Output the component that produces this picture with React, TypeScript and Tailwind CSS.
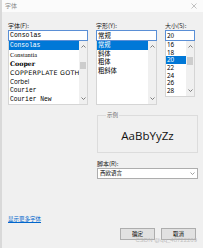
import React from 'react';

const fonts: { name: string; cls: string }[] = [
  { name: 'Consolas', cls: "font-['Liberation_Mono',monospace]" },
  { name: 'Constantia', cls: "font-['Liberation_Serif',serif]" },
  { name: 'Cooper', cls: "font-['DejaVu_Serif',serif] font-black" },
  { name: 'COPPERPLATE GOTHIC', cls: "font-['DejaVu_Sans',sans-serif] tracking-[0.3px] text-[5.4px]" },
  { name: 'Corbel', cls: "font-['Open_Sans',sans-serif]" },
  { name: 'Courier', cls: "font-['Liberation_Mono',monospace]" },
  { name: 'Courier New', cls: "font-['Liberation_Mono',monospace]" },
];

const styles = ['常规', '斜体', '粗体', '粗斜体'];
const sizes = ['16', '18', '20', '22', '24', '26', '28'];

const cjk = "font-['Noto_Sans_CJK_SC',sans-serif]";

const Scrollbar: React.FC<{ thumbTop?: number; thumbH?: number }> = ({ thumbTop, thumbH }) => (
  <div className="relative w-[8px] h-full bg-[#f0f0f0] flex flex-col items-center justify-between py-[2px] text-[#606060]">
    <svg width="5" height="3" viewBox="0 0 5 3" className="mt-[2px]">
      <path d="M0.5 2.5 L2.5 0.5 L4.5 2.5" fill="none" stroke="currentColor" strokeWidth="0.8" />
    </svg>
    {thumbTop !== undefined && (
      <div className="absolute left-[1px] w-[6px] bg-[#cdcdcd]" style={{ top: thumbTop, height: thumbH }} />
    )}
    <svg width="5" height="3" viewBox="0 0 5 3" className="mb-[2px]">
      <path d="M0.5 0.5 L2.5 2.5 L4.5 0.5" fill="none" stroke="currentColor" strokeWidth="0.8" />
    </svg>
  </div>
);

const Label: React.FC<{ children: React.ReactNode }> = ({ children }) => (
  <div className={`${cjk} text-[6px] leading-[8px] h-[8px] text-[#1a1a1a]`}>{children}</div>
);

const Input: React.FC<{ value: string; mono?: boolean }> = ({ value, mono }) => (
  <div
    className={`h-[11px] border border-[#5a8fd6] bg-white px-[1px] text-[6.5px] leading-[9px] text-black ${
      mono ? "font-['Liberation_Mono',monospace]" : cjk
    }`}
  >
    {value}
  </div>
);

export default function App() {
  return (
    <div className="w-[203px] h-[248px] bg-[#f0f0f0] border-l-2 border-[#d9d9d9] flex flex-col overflow-hidden text-[6px] leading-[8px]">
      {/* title bar */}
      <div className="h-[12px] bg-[#fbfbfb] flex items-center justify-between pl-[3px] pr-[6px]">
        <span className={`${cjk} text-[6px] text-[#8c8c8c]`}>字体</span>
        <svg width="6" height="6" viewBox="0 0 6 6" className="text-[#9a9a9a]">
          <path d="M0.5 0.5 L5.5 5.5 M5.5 0.5 L0.5 5.5" stroke="currentColor" strokeWidth="0.6" />
        </svg>
      </div>

      <div className="flex pl-[6px] pt-[10px] gap-[8px]">
        {/* font */}
        <div className="w-[80px] flex flex-col">
          <Label>字体(F):</Label>
          <Input value="Consolas" mono />
          <div className="h-[64px] bg-white border border-[#d5d5d5] border-t-0 flex">
            <div className="flex-1 flex flex-col overflow-hidden">
              {fonts.map((f, i) => (
                <div
                  key={f.name}
                  className={`h-[9px] leading-[9px] text-[6.3px] whitespace-nowrap pl-[1px] ${f.cls} ${
                    i === 0 ? 'bg-[#0078d7] text-white' : 'text-black'
                  }`}
                >
                  {f.name}
                </div>
              ))}
            </div>
            <Scrollbar thumbTop={21} thumbH={7} />
          </div>
        </div>

        {/* style */}
        <div className="w-[61px] flex flex-col">
          <Label>字形(Y):</Label>
          <Input value="常规" />
          <div className="h-[64px] bg-white border border-[#d5d5d5] border-t-0 flex">
            <div className="flex-1 flex flex-col">
              {styles.map((s, i) => (
                <div
                  key={s}
                  className={`h-[8.7px] leading-[8.7px] text-[6.3px] pl-[1px] ${cjk} ${
                    i === 0 ? 'bg-[#0078d7] text-white' : 'text-black'
                  }`}
                >
                  {s}
                </div>
              ))}
            </div>
            <Scrollbar />
          </div>
        </div>

        {/* size */}
        <div className="w-[30px] flex flex-col">
          <Label>大小(S):</Label>
          <Input value="20" />
          <div className="h-[56px] bg-white border border-[#d5d5d5] border-t-0 flex">
            <div className="flex-1 flex flex-col overflow-hidden">
              {sizes.map((s, i) => (
                <div
                  key={s}
                  className={`h-[7.7px] shrink-0 leading-[7.7px] text-[6.3px] pl-[1px] font-['Noto_Sans',sans-serif] ${
                    i === 2 ? 'bg-[#0078d7] text-white' : 'text-black'
                  }`}
                >
                  {s}
                </div>
              ))}
            </div>
            <Scrollbar thumbTop={16} thumbH={8} />
          </div>
        </div>
      </div>

      {/* sample + script */}
      <div className="flex justify-end pr-[5px] mt-[10px]">
        <div className="w-[101px] flex flex-col">
          <div className="relative h-[38px] border border-[#dcdcdc] flex items-center justify-center">
            <span className={`absolute -top-[4px] left-[8px] bg-[#f0f0f0] px-[1px] ${cjk} text-[5.5px] leading-[7px] text-[#6d6d6d]`}>
              示例
            </span>
            <span className="font-['Open_Sans',sans-serif] text-[11.5px] leading-[14px] text-[#111] mt-[4px]">AaBbYyZz</span>
          </div>
          <div className="mt-[7px]">
            <Label>脚本(R):</Label>
          </div>
          <div className="h-[11px] bg-white border border-[#adadad] flex items-center justify-between px-[2px]">
            <span className={`${cjk} text-[5.5px] leading-[9px] text-black`}>西欧语言</span>
            <svg width="5" height="3" viewBox="0 0 5 3" className="text-[#777]">
              <path d="M0.5 0.5 L2.5 2.5 L4.5 0.5" fill="none" stroke="currentColor" strokeWidth="0.7" />
            </svg>
          </div>
        </div>
      </div>

      {/* link */}
      <div className={`pl-[6px] mt-[36px] h-[8px] ${cjk} text-[5.5px] leading-[8px]`}>
        <span className="text-[#0066cc] underline">显示更多字体</span>
      </div>

      {/* buttons */}
      <div className="relative flex justify-end gap-[6px] pr-[7px] mt-[5px] h-[12px]">
        <button className={`w-[35px] h-[12px] bg-[#e1e1e1] border border-[#adadad] ${cjk} text-[5.5px] leading-[10px] text-black`}>
          确定
        </button>
        <button className={`w-[35px] h-[12px] bg-[#e1e1e1] border border-[#adadad] ${cjk} text-[5.5px] leading-[10px] text-black`}>
          取消
        </button>
        <span className="absolute right-[6px] top-[8px] font-['Liberation_Sans',sans-serif] text-[6px] leading-[8px] text-[#b8b8b8]/90 whitespace-nowrap">
          CSDN @qq_48722269
        </span>
      </div>
    </div>
  );
}
